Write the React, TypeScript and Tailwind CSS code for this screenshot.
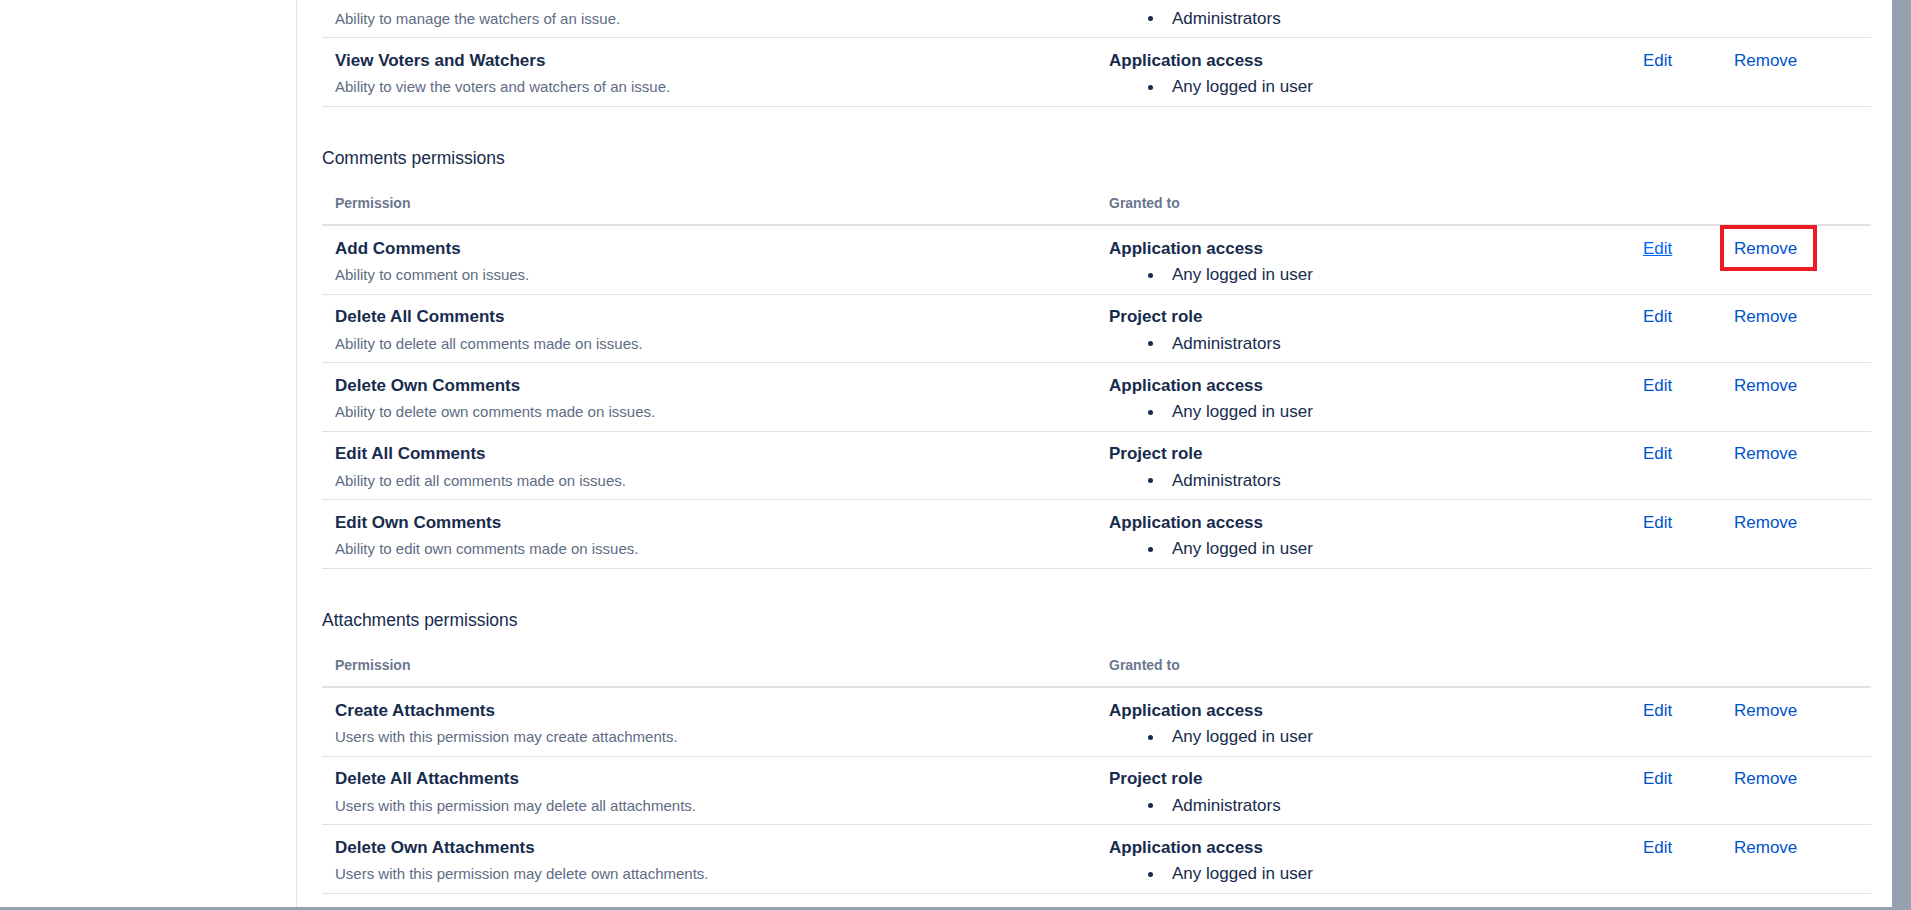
import React from 'react';

type Perm = {
  title: string;
  desc: string;
  kind: string;
  who: string;
};

const watchers: Perm[] = [
  { title: 'Manage Watchers', desc: 'Ability to manage the watchers of an issue.', kind: 'Project role', who: 'Administrators' },
  { title: 'View Voters and Watchers', desc: 'Ability to view the voters and watchers of an issue.', kind: 'Application access', who: 'Any logged in user' },
];

const comments: Perm[] = [
  { title: 'Add Comments', desc: 'Ability to comment on issues.', kind: 'Application access', who: 'Any logged in user' },
  { title: 'Delete All Comments', desc: 'Ability to delete all comments made on issues.', kind: 'Project role', who: 'Administrators' },
  { title: 'Delete Own Comments', desc: 'Ability to delete own comments made on issues.', kind: 'Application access', who: 'Any logged in user' },
  { title: 'Edit All Comments', desc: 'Ability to edit all comments made on issues.', kind: 'Project role', who: 'Administrators' },
  { title: 'Edit Own Comments', desc: 'Ability to edit own comments made on issues.', kind: 'Application access', who: 'Any logged in user' },
];

const attachments: Perm[] = [
  { title: 'Create Attachments', desc: 'Users with this permission may create attachments.', kind: 'Application access', who: 'Any logged in user' },
  { title: 'Delete All Attachments', desc: 'Users with this permission may delete all attachments.', kind: 'Project role', who: 'Administrators' },
  { title: 'Delete Own Attachments', desc: 'Users with this permission may delete own attachments.', kind: 'Application access', who: 'Any logged in user' },
];

const cols = 'grid grid-cols-[774px_534px_91px_1fr]';

const Row: React.FC<{ p: Perm; hovered?: boolean }> = ({ p, hovered }) => (
  <div className={`${cols} h-[68.5px] border-b border-[#dfe1e6]`}>
    <div className="pl-[13px] pt-[10.5px]">
      <div className="text-[17px] leading-[24px] font-bold text-[#172b4d]">{p.title}</div>
      <div className="mt-[4.5px] text-[15px] leading-[20px] text-[#5e6c84]">{p.desc}</div>
    </div>
    <div className="pl-[13px] pt-[10.5px]">
      <div className="text-[17px] leading-[24px] font-bold text-[#172b4d]">{p.kind}</div>
      <div className="mt-[4.5px] flex items-center text-[17px] leading-[20px] text-[#172b4d]">
        <span className="ml-[39px] mr-[19px] inline-block w-[5px] h-[5px] rounded-full bg-[#172b4d]"></span>
        {p.who}
      </div>
    </div>
    <div className="pl-[13px] pt-[10.5px] text-[17px] leading-[24px]">
      <a className={hovered ? 'text-[#0065ff] underline' : 'text-[#0052cc]'}>Edit</a>
    </div>
    <div className="relative pl-[13px] pt-[10.5px] text-[17px] leading-[24px]">
      <a className="text-[#0052cc]">Remove</a>
      {hovered && (
        <span className="absolute left-[-1px] top-[-1px] w-[97px] h-[46px] border-4 border-[#ed1c24]"></span>
      )}
    </div>
  </div>
);

const Section: React.FC<{ heading: string; rows: Perm[]; hoverFirst?: boolean }> = ({ heading, rows, hoverFirst }) => (
  <section className="mt-[39.5px]">
    <h3 className="text-[17.5px] leading-[24px] text-[#172b4d]">{heading}</h3>
    <div className={`${cols} pt-[23px] pb-[11px] border-b-2 border-[#dfe1e6] text-[14px] leading-[20px] font-semibold text-[#6b778c]`}>
      <div className="pl-[13px]">Permission</div>
      <div className="pl-[13px]">Granted to</div>
    </div>
    {rows.map((r, i) => (
      <Row key={r.title} p={r} hovered={hoverFirst && i === 0} />
    ))}
  </section>
);

export default function App() {
  return (
    <div className="w-[1911px] h-[910px] overflow-hidden flex flex-col bg-white font-['Liberation_Sans',Arial,sans-serif]">
      <div className="flex flex-1 min-h-0">
        <aside className="w-[297px] shrink-0 border-r border-[#dfe1e6] bg-white"></aside>
        <main className="flex-1 min-w-0 overflow-hidden pl-[25px] pr-[21px]">
          {/* page is scrolled: first section's rows sit partly above the fold */}
          <div className="mt-[-30.5px]">
            {watchers.map((r) => (
              <Row key={r.title} p={r} />
            ))}
          </div>
          <Section heading="Comments permissions" rows={comments} hoverFirst />
          <Section heading="Attachments permissions" rows={attachments} />
        </main>
        <div className="w-[19px] shrink-0 bg-[#97a0af]"></div>
      </div>
      <div className="h-[3px] shrink-0 bg-[#97a0af]"></div>
    </div>
  );
}
